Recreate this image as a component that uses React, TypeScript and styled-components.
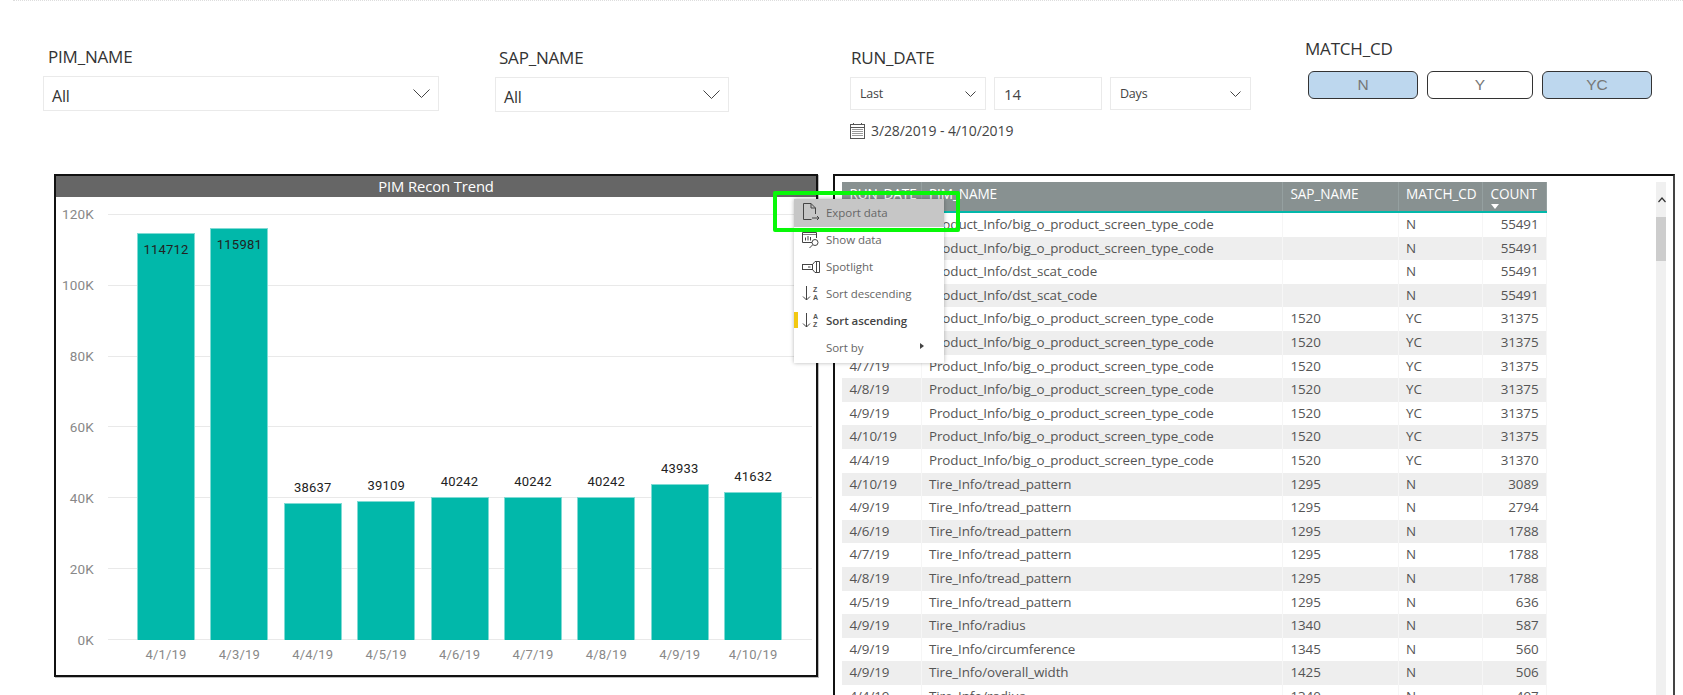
import React from 'react';
import styled, { createGlobalStyle } from 'styled-components';

const GlobalStyle = createGlobalStyle`
  html, body {
    margin: 0;
    padding: 0;
    background: #fff;
    overflow: hidden;
    font-family: "Open Sans", "Noto Sans", sans-serif;
  }
`;

const Page = styled.div`
  position: relative;
  width: 1683px;
  height: 695px;
  overflow: hidden;
  background: #fff;
`;

const TopRule = styled.div`
  height: 2px;
  margin-left: 13px;
  border-top: 1px dotted #ddd;
  box-sizing: border-box;
`;

const FilterRow = styled.div`
  display: flex;
  height: 172px;
  padding-left: 43px;
`;

const FilterGroup = styled.div<{ $width: number; $left?: number; $top: number }>`
  width: ${p => p.$width}px;
  margin-left: ${p => p.$left || 0}px;
  padding-top: ${p => p.$top}px;
  box-sizing: border-box;
`;

const FilterLabel = styled.div<{ $indent: number; $gap: number }>`
  height: 20px;
  line-height: 20px;
  margin-left: ${p => p.$indent}px;
  margin-bottom: ${p => p.$gap}px;
  font-size: 17px;
  color: #333;
  letter-spacing: -0.2px;
`;

const SelectBox = styled.div<{ $width?: number; $height: number; $pad: number }>`
  display: flex;
  align-items: center;
  justify-content: space-between;
  width: ${p => (p.$width ? `${p.$width}px` : '100%')};
  height: ${p => p.$height}px;
  padding: 0 ${p => p.$pad}px;
  box-sizing: border-box;
  border: 1px solid #eaeaea;
  color: #333;
`;

const AllText = styled.span`
  font-size: 16px;
  padding-top: 4px;
  letter-spacing: -0.2px;
`;

const SmallText = styled.span<{ $large?: boolean }>`
  font-size: ${p => (p.$large ? 15 : 12.5)}px;
  color: #444;
  letter-spacing: -0.2px;
`;

const DateRow = styled.div`
  display: flex;
  gap: 8px;
`;

const DateRange = styled.div`
  display: flex;
  align-items: center;
  gap: 6px;
  margin-top: 11px;
  font-size: 14px;
  color: #444;
  letter-spacing: -0.1px;
`;

const ToggleRow = styled.div`
  display: flex;
  gap: 9px;
  padding-left: 3px;
`;

const Toggle = styled.div<{ $on?: boolean; $width: number }>`
  width: ${p => p.$width}px;
  height: 28px;
  line-height: 26px;
  box-sizing: border-box;
  border: 1.5px solid #333;
  border-radius: 6px;
  text-align: center;
  font-family: "Liberation Sans", Arial, sans-serif;
  font-size: 15.5px;
  color: #777;
  background: ${p => (p.$on ? '#bdd7ee' : '#fff')};
`;

const Panels = styled.div`
  display: flex;
  align-items: flex-start;
  padding-left: 54px;
`;

const ChartCard = styled.div`
  width: 764px;
  height: 503px;
  box-sizing: border-box;
  border: 2px solid #111;
  box-shadow: 1px 1px 0 #bbb;
`;

const ChartTitle = styled.div`
  height: 21px;
  line-height: 20px;
  background: #666;
  color: #fff;
  text-align: center;
  font-size: 14.8px;
  letter-spacing: -0.1px;
`;

const ChartBody = styled.div`
  display: flex;
  padding-top: 17px;
`;

const YAxis = styled.div`
  display: flex;
  flex-direction: column;
  justify-content: space-between;
  align-items: flex-end;
  width: 38px;
  height: 426px;
  margin-right: 14px;
`;

const YTick = styled.div`
  height: 0;
  line-height: 0;
  font-family: Roboto, sans-serif;
  font-size: 13.5px;
  letter-spacing: 0.2px;
  color: #888;
`;

const PlotColumn = styled.div`
  width: 704px;
`;

const Plot = styled.div`
  position: relative;
  height: 426px;
`;

const GridLines = styled.div`
  position: absolute;
  inset: 0;
  display: flex;
  flex-direction: column;
  justify-content: space-between;
`;

const GridLine = styled.div`
  height: 1px;
  background: #e9e9e9;
`;

const Bars = styled.div`
  position: relative;
  display: flex;
  align-items: flex-end;
  gap: 15.4px;
  height: 100%;
  padding-left: 29px;
`;

const BarSlot = styled.div`
  display: flex;
  flex-direction: column;
  align-items: center;
  width: 58px;
`;

const ValueLabel = styled.div<{ $inside?: boolean }>`
  height: 16px;
  line-height: 16px;
  margin: ${p => (p.$inside ? '8px 0 0' : '0 0 7px')};
  font-family: Roboto, sans-serif;
  font-size: 13px;
  letter-spacing: 0.2px;
  color: #222;
`;

const Bar = styled.div`
  display: flex;
  justify-content: center;
  width: 100%;
  box-sizing: border-box;
  background: #01b8aa;
  border: 1px solid #7fdbd4;
  border-bottom: 0;
`;

const XAxis = styled.div`
  display: flex;
  gap: 15.4px;
  padding: 7px 0 0 29px;
`;

const XTick = styled.div`
  width: 58px;
  text-align: center;
  font-family: Roboto, sans-serif;
  font-size: 13px;
  letter-spacing: 0.2px;
  color: #888;
`;

const TableCard = styled.div`
  display: flex;
  justify-content: space-between;
  width: 842px;
  height: 540px;
  margin-left: 15px;
  padding: 6px 7px 0;
  box-sizing: border-box;
  border: 2px solid #111;
  border-right-color: #444;
`;

const Grid = styled.div`
  width: 705px;
`;

const cols = '79.5px 361.5px 115.5px 84.5px 64px';

const HeadRow = styled.div`
  display: grid;
  grid-template-columns: ${cols};
  height: 31px;
  box-sizing: border-box;
  background: #889191;
  border-bottom: 2px solid #01b8aa;
`;

const HeadCell = styled.div`
  position: relative;
  padding: 3px 0 0 7.5px;
  font-size: 13.6px;
  line-height: 18px;
  letter-spacing: -0.1px;
  color: #fff;
  border-right: 1px solid #95a0a0;
  white-space: nowrap;
`;

const SortMark = styled.span`
  position: absolute;
  left: 8px;
  top: 22px;
  width: 0;
  height: 0;
  border-left: 4.5px solid transparent;
  border-right: 4.5px solid transparent;
  border-top: 5px solid #fff;
`;

const BodyRow = styled.div<{ $alt: boolean }>`
  display: grid;
  grid-template-columns: ${cols};
  height: 23.6px;
  background: ${p => (p.$alt ? '#eee' : '#fff')};
`;

const Cell = styled.div<{ $right?: boolean }>`
  padding: 0 7.5px;
  font-size: 13.4px;
  line-height: 23.6px;
  letter-spacing: -0.1px;
  color: #555;
  text-align: ${p => (p.$right ? 'right' : 'left')};
  border-right: 1px solid #f6f6f6;
  white-space: nowrap;
`;

const ScrollTrack = styled.div`
  width: 10px;
  height: 530px;
  background: #f0f0f0;
  margin-right: 0;
`;

const ScrollArrow = styled.div`
  display: flex;
  align-items: center;
  justify-content: center;
  height: 35px;
  padding-left: 2px;
  box-sizing: border-box;
`;

const ScrollThumb = styled.div`
  height: 44px;
  background: #cdcdcd;
`;

const Menu = styled.div`
  position: absolute;
  left: 794px;
  top: 199px;
  width: 150px;
  height: 164px;
  background: #fff;
  box-shadow: 0 0 4px rgba(0, 0, 0, 0.3);
`;

const MenuItem = styled.div<{ $hover?: boolean; $tall?: boolean }>`
  position: relative;
  display: flex;
  align-items: center;
  height: ${p => (p.$tall ? 28 : 27)}px;
  padding: 0 0 2px 8px;
  box-sizing: border-box;
  background: ${p => (p.$hover ? '#c6c6c6' : 'transparent')};
`;

const MenuIcon = styled.div`
  display: flex;
  align-items: center;
  width: 24px;
  height: 20px;
`;

const MenuText = styled.span<{ $bold?: boolean }>`
  font-size: 11.5px;
  font-weight: ${p => (p.$bold ? 600 : 400)};
  color: ${p => (p.$bold ? '#444' : '#666')};
  letter-spacing: -0.05px;
`;

const ActiveMark = styled.div`
  position: absolute;
  left: 0;
  top: 4px;
  width: 4px;
  height: 16px;
  background: #f2c811;
`;

const SubArrow = styled.div`
  position: absolute;
  left: 126px;
  top: 8px;
  width: 0;
  height: 0;
  border-top: 3.5px solid transparent;
  border-bottom: 3.5px solid transparent;
  border-left: 4px solid #444;
`;

const SortLetters = styled.div`
  display: flex;
  flex-direction: column;
  margin-left: 2px;
  font-family: "Liberation Sans", Arial, sans-serif;
  font-size: 7px;
  line-height: 7.5px;
  font-weight: 700;
  color: #555;
`;

const Callout = styled.div`
  position: absolute;
  left: 773px;
  top: 191px;
  width: 187px;
  height: 41px;
  box-sizing: border-box;
  border: 4px solid #08f808;
  border-radius: 2px;
`;

const Chevron = ({ w, h }: { w: number; h: number }) => (
  <svg width={w} height={h} viewBox={`0 0 ${w} ${h}`} fill="none">
    <polyline points={`0.5,0.5 ${w / 2},${h - 0.5} ${w - 0.5},0.5`} stroke="#444" strokeWidth="1" />
  </svg>
);

const CalendarIcon = () => (
  <svg width="15" height="16" viewBox="0 0 15 16" fill="none" stroke="#555" strokeWidth="1">
    <rect x="0.5" y="1.5" width="14" height="14" />
    <line x1="0.5" y1="4.5" x2="14.5" y2="4.5" />
    <line x1="3.5" y1="0" x2="3.5" y2="2" />
    <line x1="11.5" y1="0" x2="11.5" y2="2" />
    <path d="M2 6.5h11M2 8.5h11M2 10.5h11M2 12.5h11M3.5 6v8M5.5 6v8M7.5 6v8M9.5 6v8M11.5 6v8" strokeWidth="0.6" strokeDasharray="1 1" />
  </svg>
);

const ExportIcon = () => (
  <svg width="18" height="18" viewBox="0 0 18 18" fill="none" stroke="#444" strokeWidth="1">
    <path d="M9.5 16.5H1.5V0.5H9L13.5 5V11" />
    <path d="M9 0.5V5H13.5" />
    <path d="M10 15H17M15 13l2 2-2 2" />
  </svg>
);

const ShowDataIcon = () => (
  <svg width="18" height="18" viewBox="0 0 18 18" fill="none" stroke="#444" strokeWidth="1">
    <path d="M10 11.5H0.5V1.5H14.5V7" />
    <path d="M0.5 3.5H14.5" strokeWidth="0.7" />
    <path d="M3.5 9.5V6.5M6 9.5V5M8.5 9.5V6" />
    <circle cx="13" cy="11.5" r="3" />
    <path d="M10.5 14L7.5 17" />
  </svg>
);

const SpotlightIcon = () => (
  <svg width="18" height="12" viewBox="0 0 18 12" fill="none" stroke="#444" strokeWidth="1">
    <rect x="0.5" y="3.5" width="10" height="5" />
    <path d="M10.5 3.5L13 0.5H17.5V11.5H13L10.5 8.5" />
    <path d="M14.5 1V11" />
    <path d="M6 6H8.5" />
  </svg>
);

const SortIcon = ({ top, bottom }: { top: string; bottom: string }) => (
  <>
    <svg width="9" height="15" viewBox="0 0 9 15" fill="none" stroke="#444" strokeWidth="1">
      <path d="M4.5 0V14M1 10.5l3.5 3.5 3.5-3.5" />
    </svg>
    <SortLetters>
      <span>{top}</span>
      <span>{bottom}</span>
    </SortLetters>
  </>
);

const chartData = [
  { date: '4/1/19', value: 114712 },
  { date: '4/3/19', value: 115981 },
  { date: '4/4/19', value: 38637 },
  { date: '4/5/19', value: 39109 },
  { date: '4/6/19', value: 40242 },
  { date: '4/7/19', value: 40242 },
  { date: '4/8/19', value: 40242 },
  { date: '4/9/19', value: 43933 },
  { date: '4/10/19', value: 41632 },
];

const yTicks = ['120K', '100K', '80K', '60K', '40K', '20K', '0K'];

const PO = 'Product_Info/big_o_product_screen_type_code';
const DST = 'Product_Info/dst_scat_code';
const TREAD = 'Tire_Info/tread_pattern';

const rows: string[][] = [
  ['4/3/19', PO, '', 'N', '55491'],
  ['4/1/19', PO, '', 'N', '55491'],
  ['4/3/19', DST, '', 'N', '55491'],
  ['4/1/19', DST, '', 'N', '55491'],
  ['4/5/19', PO, '1520', 'YC', '31375'],
  ['4/6/19', PO, '1520', 'YC', '31375'],
  ['4/7/19', PO, '1520', 'YC', '31375'],
  ['4/8/19', PO, '1520', 'YC', '31375'],
  ['4/9/19', PO, '1520', 'YC', '31375'],
  ['4/10/19', PO, '1520', 'YC', '31375'],
  ['4/4/19', PO, '1520', 'YC', '31370'],
  ['4/10/19', TREAD, '1295', 'N', '3089'],
  ['4/9/19', TREAD, '1295', 'N', '2794'],
  ['4/6/19', TREAD, '1295', 'N', '1788'],
  ['4/7/19', TREAD, '1295', 'N', '1788'],
  ['4/8/19', TREAD, '1295', 'N', '1788'],
  ['4/5/19', TREAD, '1295', 'N', '636'],
  ['4/9/19', 'Tire_Info/radius', '1340', 'N', '587'],
  ['4/9/19', 'Tire_Info/circumference', '1345', 'N', '560'],
  ['4/9/19', 'Tire_Info/overall_width', '1425', 'N', '506'],
  ['4/4/19', 'Tire_Info/radius', '1340', 'N', '497'],
];

const App: React.FC = () => {
  return (
    <Page>
      <GlobalStyle />
      <TopRule />
      <FilterRow>
        <FilterGroup $width={396} $top={45}>
          <FilterLabel $indent={5} $gap={9}>PIM_NAME</FilterLabel>
          <SelectBox $height={35} $pad={8}>
            <AllText>All</AllText>
            <Chevron w={17} h={9} />
          </SelectBox>
        </FilterGroup>
        <FilterGroup $width={234} $left={56} $top={46}>
          <FilterLabel $indent={4} $gap={9}>SAP_NAME</FilterLabel>
          <SelectBox $height={35} $pad={8}>
            <AllText>All</AllText>
            <Chevron w={17} h={9} />
          </SelectBox>
        </FilterGroup>
        <FilterGroup $width={401} $left={121} $top={46}>
          <FilterLabel $indent={1} $gap={9}>RUN_DATE</FilterLabel>
          <DateRow>
            <SelectBox $width={136} $height={33} $pad={9}>
              <SmallText>Last</SmallText>
              <Chevron w={11} h={6} />
            </SelectBox>
            <SelectBox $width={108} $height={33} $pad={9}>
              <SmallText $large>14</SmallText>
            </SelectBox>
            <SelectBox $width={141} $height={33} $pad={9}>
              <SmallText>Days</SmallText>
              <Chevron w={11} h={6} />
            </SelectBox>
          </DateRow>
          <DateRange>
            <CalendarIcon />
            3/28/2019 - 4/10/2019
          </DateRange>
        </FilterGroup>
        <FilterGroup $width={350} $left={54} $top={37}>
          <FilterLabel $indent={0} $gap={12}>MATCH_CD</FilterLabel>
          <ToggleRow>
            <Toggle $on $width={110}>N</Toggle>
            <Toggle $width={106}>Y</Toggle>
            <Toggle $on $width={110}>YC</Toggle>
          </ToggleRow>
        </FilterGroup>
      </FilterRow>

      <Panels>
        <ChartCard>
          <ChartTitle>PIM Recon Trend</ChartTitle>
          <ChartBody>
            <YAxis>
              {yTicks.map(t => <YTick key={t}>{t}</YTick>)}
            </YAxis>
            <PlotColumn>
              <Plot>
                <GridLines>
                  {yTicks.map(t => <GridLine key={t} />)}
                </GridLines>
                <Bars>
                  {chartData.map(d => {
                    const height = (d.value / 120000) * 426;
                    const inside = d.value > 100000;
                    return (
                      <BarSlot key={d.date}>
                        {!inside && <ValueLabel>{d.value}</ValueLabel>}
                        <Bar style={{ height }}>
                          {inside && <ValueLabel $inside>{d.value}</ValueLabel>}
                        </Bar>
                      </BarSlot>
                    );
                  })}
                </Bars>
              </Plot>
              <XAxis>
                {chartData.map(d => <XTick key={d.date}>{d.date}</XTick>)}
              </XAxis>
            </PlotColumn>
          </ChartBody>
        </ChartCard>

        <TableCard>
          <Grid>
            <HeadRow>
              <HeadCell>RUN_DATE</HeadCell>
              <HeadCell>PIM_NAME</HeadCell>
              <HeadCell>SAP_NAME</HeadCell>
              <HeadCell>MATCH_CD</HeadCell>
              <HeadCell>COUNT<SortMark /></HeadCell>
            </HeadRow>
            {rows.map((r, i) => (
              <BodyRow key={i} $alt={i % 2 === 1}>
                <Cell>{r[0]}</Cell>
                <Cell>{r[1]}</Cell>
                <Cell>{r[2]}</Cell>
                <Cell>{r[3]}</Cell>
                <Cell $right>{r[4]}</Cell>
              </BodyRow>
            ))}
          </Grid>
          <ScrollTrack>
            <ScrollArrow>
              <svg width="8" height="6" viewBox="0 0 8 6" fill="none" stroke="#333" strokeWidth="1.2">
                <path d="M0.5 5L4 1L7.5 5" />
              </svg>
            </ScrollArrow>
            <ScrollThumb />
          </ScrollTrack>
        </TableCard>
      </Panels>

      <Menu>
        <MenuItem $hover $tall>
          <MenuIcon><ExportIcon /></MenuIcon>
          <MenuText>Export data</MenuText>
        </MenuItem>
        <MenuItem>
          <MenuIcon><ShowDataIcon /></MenuIcon>
          <MenuText>Show data</MenuText>
        </MenuItem>
        <MenuItem>
          <MenuIcon><SpotlightIcon /></MenuIcon>
          <MenuText>Spotlight</MenuText>
        </MenuItem>
        <MenuItem>
          <MenuIcon><SortIcon top="Z" bottom="A" /></MenuIcon>
          <MenuText>Sort descending</MenuText>
        </MenuItem>
        <MenuItem>
          <ActiveMark />
          <MenuIcon><SortIcon top="A" bottom="Z" /></MenuIcon>
          <MenuText $bold>Sort ascending</MenuText>
        </MenuItem>
        <MenuItem>
          <MenuIcon />
          <MenuText>Sort by</MenuText>
          <SubArrow />
        </MenuItem>
      </Menu>
      <Callout />
    </Page>
  );
};

export default App;
